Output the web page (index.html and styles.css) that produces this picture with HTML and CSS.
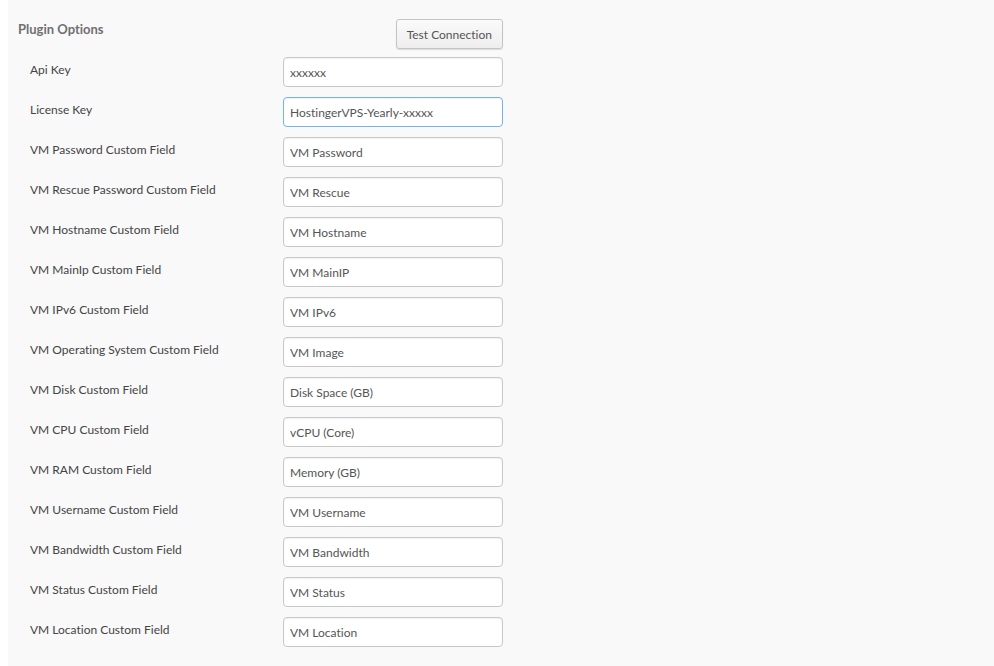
FILE: index.html
```html
<!DOCTYPE html>
<html lang="en">
<head>
  <meta charset="UTF-8" />
  <meta name="viewport" content="width=device-width, initial-scale=1.0" />
  <title>Plugin Options</title>
  <link rel="stylesheet" href="styles.css">
</head>
<body>
  <form class="plugin-options">
    <div class="options-header">
      <h2>Plugin Options</h2>
      <div class="actions">
        <button type="button" class="btn">Test Connection</button>
      </div>
    </div>
    <div class="form-row">
      <label for="api_key">Api Key</label>
      <input type="text" id="api_key" value="xxxxxx">
    </div>
    <div class="form-row">
      <label for="license_key">License Key</label>
      <input type="text" id="license_key" class="focused" value="HostingerVPS-Yearly-xxxxx">
    </div>
    <div class="form-row">
      <label for="vm_password">VM Password Custom Field</label>
      <input type="text" id="vm_password" value="VM Password">
    </div>
    <div class="form-row">
      <label for="vm_rescue">VM Rescue Password Custom Field</label>
      <input type="text" id="vm_rescue" value="VM Rescue">
    </div>
    <div class="form-row">
      <label for="vm_hostname">VM Hostname Custom Field</label>
      <input type="text" id="vm_hostname" value="VM Hostname">
    </div>
    <div class="form-row">
      <label for="vm_mainip">VM MainIp Custom Field</label>
      <input type="text" id="vm_mainip" value="VM MainIP">
    </div>
    <div class="form-row">
      <label for="vm_ipv6">VM IPv6 Custom Field</label>
      <input type="text" id="vm_ipv6" value="VM IPv6">
    </div>
    <div class="form-row">
      <label for="vm_os">VM Operating System Custom Field</label>
      <input type="text" id="vm_os" value="VM Image">
    </div>
    <div class="form-row">
      <label for="vm_disk">VM Disk Custom Field</label>
      <input type="text" id="vm_disk" value="Disk Space (GB)">
    </div>
    <div class="form-row">
      <label for="vm_cpu">VM CPU Custom Field</label>
      <input type="text" id="vm_cpu" value="vCPU (Core)">
    </div>
    <div class="form-row">
      <label for="vm_ram">VM RAM Custom Field</label>
      <input type="text" id="vm_ram" value="Memory (GB)">
    </div>
    <div class="form-row">
      <label for="vm_username">VM Username Custom Field</label>
      <input type="text" id="vm_username" value="VM Username">
    </div>
    <div class="form-row">
      <label for="vm_bandwidth">VM Bandwidth Custom Field</label>
      <input type="text" id="vm_bandwidth" value="VM Bandwidth">
    </div>
    <div class="form-row">
      <label for="vm_status">VM Status Custom Field</label>
      <input type="text" id="vm_status" value="VM Status">
    </div>
    <div class="form-row">
      <label for="vm_location">VM Location Custom Field</label>
      <input type="text" id="vm_location" value="VM Location">
    </div>
  </form>
</body>
</html>
```

FILE: styles.css
```css
* {
  box-sizing: border-box;
}
body {
  margin: 0;
  padding-left: 8px;
  background-color: #fff;
  color: #444;
  font-family: Lato, "Liberation Sans", sans-serif;
  font-size: 12px;
  font-variant-ligatures: none;
  line-height: 18px;
}
.plugin-options {
  min-height: 100vh;
  padding: 19px 10px;
  background-color: #f9f9f9;
}
.options-header {
  display: grid;
  grid-template-columns: 265px 220px;
  margin-bottom: 8px;
}
.options-header h2 {
  margin: 0;
  padding-top: 1px;
  color: #707070;
  font-size: 13px;
  line-height: 18px;
  font-weight: bold;
}
.actions {
  text-align: right;
}
.btn {
  height: 30px;
  padding: 1px 10px 0;
  border: 1px solid #c4c4c4;
  border-radius: 3px;
  background: linear-gradient(#fafafa, #eee);
  box-shadow: 0 1px 1px rgba(0, 0, 0, 0.12);
  color: #555;
  font: inherit;
  font-variant-ligatures: none;
  vertical-align: top;
  cursor: pointer;
}
.form-row {
  display: grid;
  grid-template-columns: 253px 220px;
  align-items: start;
  padding-left: 12px;
  margin-bottom: 10px;
}
.form-row:last-child {
  margin-bottom: 0;
}
.form-row label {
  padding-top: 4px;
}
.form-row input {
  width: 100%;
  height: 30px;
  padding: 0 6px;
  border: 1px solid #c8c8c8;
  border-radius: 4px;
  background-color: #fff;
  box-shadow: inset 0 1px 2px rgba(0, 0, 0, 0.06);
  color: #555;
  font: inherit;
  font-variant-ligatures: none;
  outline: none;
}
.form-row input:focus,
.form-row input.focused {
  border-color: #74b4ee;
}
```
